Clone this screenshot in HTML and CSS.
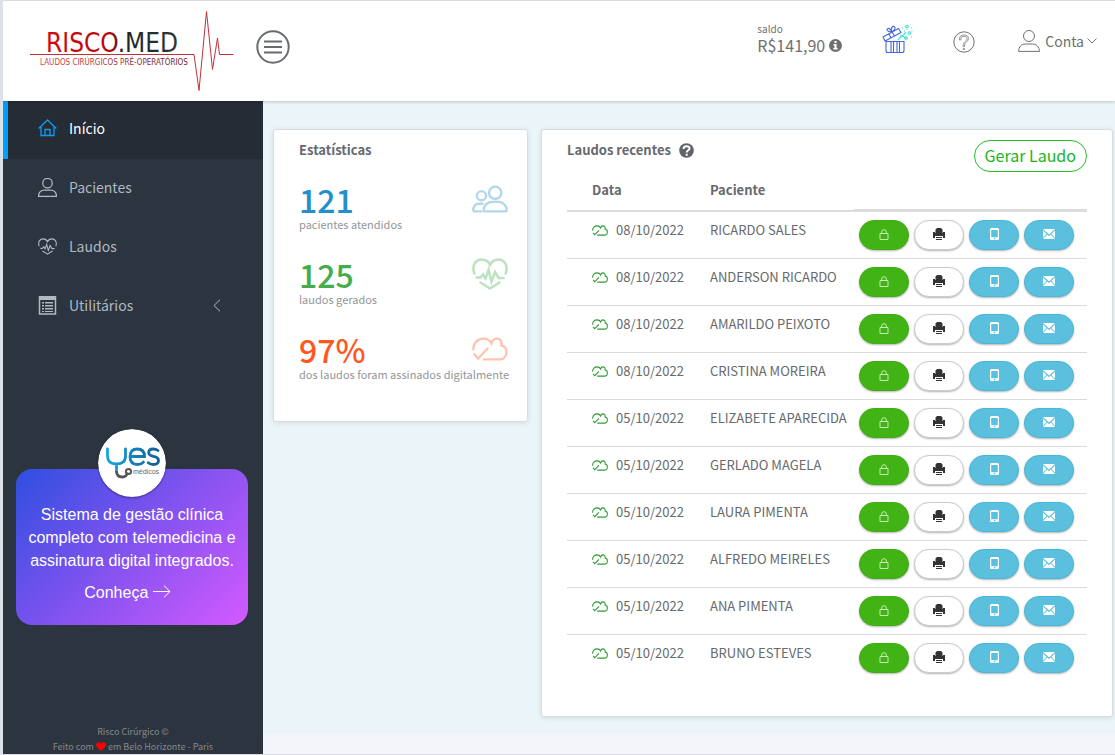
FILE: index.html
```html
<!DOCTYPE html>
<html lang="pt-BR">
<head>
<meta charset="utf-8">
<meta name="viewport" content="width=device-width, initial-scale=1">
<title>Risco.Med</title>
<link rel="stylesheet" href="styles.css">
</head>
<body>
<svg class="sprite" aria-hidden="true">
  <symbol id="i-user" viewBox="0 0 22 22"><circle cx="11" cy="6" r="5.5"/><path d="M.6 21.4c0-4.600 3-7.400 7-7.400h6.800c4 0 7 2.800 7 7.400z"/></symbol>
  <symbol id="i-heart" viewBox="0 0 36 32"><path d="M2.300 15.500C-1 6 5 1.500 9.500 1.500c4 0 7 2 8.500 5.500 1.500-3.500 4.500-5.500 8.500-5.500 4.500 0 10.500 4.500 7.200 14M4.500 19.500h4l2.500-3 2.500 4 3-8.500 3 11.500 3.500-9.500 3.500 6h5M8.500 24.500 18 30.500l9.500-6"/></symbol>
  <symbol id="i-cloud" viewBox="0 0 38 25"><path d="M1.500 13C1 6 6.500 1.500 12 1.500c4.500 0 7 2 8.500 5 1-3.500 3-5 5.500-5 3.500 0 6 3 5 7.500 3.500.5 5.500 3.500 5.500 7 0 4-3 7.500-7 7.500H12.500M2.500 18l4 4.500L16.500 12"/></symbol>
  <symbol id="i-lock" viewBox="0 0 10 11"><path d="M1 4.500h8v6H1zM2.700 4.500v-1.500a2.300 2.300 0 0 1 4.600 0v1.500"/></symbol>
  <symbol id="i-print" viewBox="0 0 12 12"><path d="M4 0h4l1.500 1.500V5h-7V1.500zM0 4h2v2h8V4h2v6h-2V8H2v2H0zM3 9h6v1H3zM3 11h6v1H3zM2 5h8v3H2z"/></symbol>
  <symbol id="i-phone" viewBox="0 0 9 12"><path fill-rule="evenodd" d="M1.500 0h6Q9 0 9 1.500v9Q9 12 7.500 12h-6Q0 12 0 10.500v-9Q0 0 1.500 0zM1.200 2v7.300h6.600V2zM3.800 10v1.200h1.500V10z"/></symbol>
  <symbol id="i-mail" viewBox="0 0 12 10"><path d="M0 0h12L6 5.500zM0 1.500 3.600 5 0 8.700zM12 1.500 8.400 5 12 8.700zM4.300 5.600 6 7.200l1.700-1.600L12 10H0z"/></symbol>
</svg>

<header class="topbar">
  <a class="brand" href="#" aria-label="Risco.Med">
    <svg width="206" height="84" viewBox="0 0 206 84">
      <defs>
        <linearGradient id="g-name"><stop offset="0" stop-color="#d6080c"/><stop offset=".5" stop-color="#b00a0e"/><stop offset=".56" stop-color="#222"/><stop offset="1" stop-color="#333"/></linearGradient>
        <linearGradient id="g-sub"><stop offset="0" stop-color="#d64545"/><stop offset="1" stop-color="#6d2228"/></linearGradient>
      </defs>
      <text class="brand-name" x="17" y="42" fill="url(#g-name)">RISCO.MED</text>
      <text class="brand-sub" x="11" y="55" fill="url(#g-sub)">LAUDOS CIRÚRGICOS PRÉ-OPERATÓRIOS</text>
      <path d="M1 44.500h164l5 36 7.500-79 6 58 5-31.500 2 16.500h14" fill="none" stroke="#bd3338"/>
    </svg>
  </a>
  <button class="icon-btn burger" type="button" aria-label="Menu">
    <svg class="line" width="34" height="34" viewBox="0 0 34 34"><circle cx="17" cy="17" r="15.700"/><path d="M8 11.500h18M8 17h18M8 22.500h18"/></svg>
  </button>
  <div class="balance">
    <span class="balance-label">saldo</span>
    <span class="balance-value">R$141,90
      <svg width="13" height="13" viewBox="0 0 13 13"><circle cx="6.500" cy="6.500" r="6.500" fill="#6f6f6f"/><path fill="#fff" d="M5.400 2h2.200v1.900H5.400zM4.500 5h3.100v4h1v1.500H4.400V9h1V6.500h-.9z"/></svg>
    </span>
  </div>
  <button class="icon-btn gift" type="button" aria-label="Presentes">
    <svg width="32" height="30" viewBox="0 0 32 30" fill="none" stroke-width="1.100">
      <g stroke="#4666dc"><path d="M4 17.500h18v9q0 2-2 2H6q-2 0-2-2zM9 18v10M11.500 18v10M15 18v10M17.500 18v10M1 13 16.500 4.500l2.500 4L3 17zM7 10l2 4M10 8l2.500 4M9.500 8C5 8 4 5 6 4.500s3 1.500 3.500 3.500C9 4 10 2 12 2.500s1 4-2.500 5.500"/></g>
      <g stroke="#35e3cb"><path d="M16 16c2-4 5-3 8-8M18 12c5-1 4 3 6 2"/><circle cx="25" cy="2.500" r="1.300"/><circle cx="27.500" cy="9" r="1.300"/><circle cx="24" cy="14" r="1.300"/><path d="M20 4h1M29 4h1M22 7h1M29 13h1M29.500 7h1M25 5v1"/></g>
    </svg>
  </button>
  <button class="icon-btn help" type="button" aria-label="Ajuda">
    <svg class="thin" width="22" height="22" viewBox="0 0 22 22"><circle cx="11" cy="11" r="10.200"/><path d="M6.500 9V8q0-4 4.500-4t4.500 3.600c0 3.500-4 3.400-4 6.400v1.500h-1.300V14c0-3.600 4-3.800 4-6.400Q14.200 5.300 11 5.300T7.800 8v1zM10.200 17.500h1.300v1h-1.300z" stroke-width=".700"/></svg>
  </button>
  <button class="icon-btn account" type="button">
    <svg class="thin" width="22" height="22"><use href="#i-user"/></svg>
    <span>Conta</span>
    <svg class="chev" width="10" height="6" viewBox="0 0 10 6"><path d="M.5.5 5 5 9.500.5"/></svg>
  </button>
</header>

<div class="shell">
  <aside class="sidebar">
    <nav class="menu">
      <a class="menu-item active" href="#"><svg class="thin" width="19" height="18" viewBox="0 0 19 18"><path stroke-width="1.300" d="M.7 9.500 9.500 1l8.800 8.500M3 8v8.500h13V8M7 16.500v-6h5v6"/></svg>Início</a>
      <a class="menu-item" href="#"><svg class="user-sm" width="19" height="19"><use href="#i-user"/></svg>Pacientes</a>
      <a class="menu-item" href="#"><svg class="heart-sm" width="19" height="17"><use href="#i-heart"/></svg>Laudos</a>
      <a class="menu-item" href="#"><svg width="19" height="19" viewBox="0 0 19 19"><path fill="none" stroke="currentColor" stroke-width="1.500" d="M1.500 1h16v17h-16z"/><path fill="currentColor" d="M1 0h17v4H1zM4 6h2v1.500H4zM7 6h8v1.500H7zM4 9h2v1.500H4zM7 9h8v1.500H7zM4 12h2v1.500H4zM7 12h8v1.500H7zM4 15h2v1H4zM7 15h8v1H7z"/></svg>Utilitários<svg class="thin caret" width="8" height="13" viewBox="0 0 8 13"><path d="M7 .7 1 6.500l6 5.800"/></svg></a>
    </nav>
    <section class="promo">
      <svg class="promo-logo" width="68" height="68" viewBox="0 0 68 68" role="img" aria-label="Yes médicos">
        <defs><linearGradient id="g-yes" gradientUnits="userSpaceOnUse" x1="8" y1="0" x2="62" y2="0"><stop offset="0" stop-color="#16a6e0"/><stop offset="1" stop-color="#155d93"/></linearGradient></defs>
        <circle cx="34" cy="34" r="34" fill="#fff"/>
        <g fill="none" stroke="url(#g-yes)" stroke-width="2.800" stroke-linecap="round"><path d="M9.500 20v7q0 8 9 8t9-8v-7M18.500 35v8"/><path d="M32 27.500h14.500q0-7.500-7.200-7.500t-7.300 7.500q0 8 7.500 8 4 0 6-2.500M60 21.500q-2-1.500-4.800-1.500-4.500 0-4.500 3.700 0 2.600 4.800 3.600 5 .9 5 4.200 0 4-5.300 4-3 0-5-1.800"/></g>
        <path d="M18.500 42q0 6 6 6 4 0 5-4.500" fill="none" stroke="#5b5556" stroke-width="2.800"/><circle cx="30.500" cy="42.500" r="2.600" fill="none" stroke="#5b5556" stroke-width="2"/>
        <text class="promo-logo-text" x="35" y="45">médicos</text>
      </svg>
      <p>Sistema de gestão clínica completo com telemedicina e assinatura digital integrados.</p>
      <a class="promo-link" href="#">Conheça <svg class="thin" width="18" height="13" viewBox="0 0 18 13"><path d="M0 6.500h17M11 .7l6 5.800-6 5.800"/></svg></a>
    </section>
    <footer class="credits">Risco Cirúrgico ©<br>Feito com <svg width="10" height="9" viewBox="0 0 10 9"><path fill="red" d="M5 9 .8 4.800C-1 2.500 1-.3 3.300.2 4.300.4 5 1.500 5 1.500S5.700.4 6.700.2C9-.3 11 2.500 9.200 4.800z"/></svg> em Belo Horizonte - Paris</footer>
  </aside>

  <main class="content">
    <section class="card stats">
      <h2>Estatísticas</h2>
      <div class="stat blue">
        <div class="stat-top"><strong>121</strong><svg width="36" height="28" viewBox="0 0 38 29"><circle cx="24.500" cy="8" r="6.500"/><path d="M13 27.500c-2-3.500 2-10 8-10h7c6 0 10 6.500 8 10zM10 27.500H2c-2-3 1-8 5.500-8H11"/><circle cx="10" cy="11" r="4.800"/></svg></div>
        <span>pacientes atendidos</span>
      </div>
      <div class="stat green">
        <div class="stat-top"><strong>125</strong><svg width="36" height="32"><use href="#i-heart"/></svg></div>
        <span>laudos gerados</span>
      </div>
      <div class="stat orange">
        <div class="stat-top"><strong>97%</strong><svg width="36" height="24"><use href="#i-cloud"/></svg></div>
        <span>dos laudos foram assinados digitalmente</span>
      </div>
    </section>

    <section class="card reports">
      <div class="card-head">
        <h2>Laudos recentes <svg width="15" height="15" viewBox="0 0 15 15"><circle cx="7.500" cy="7.500" r="7.300" fill="#606468"/><path fill="none" stroke="#fff" stroke-width="2" d="M4.500 6q0-2.800 3-2.800t3 2.300c0 2-2.800 1.500-2.800 4M7.700 10.800v2"/></svg></h2>
        <button class="new-report" type="button">Gerar Laudo</button>
      </div>
      <table>
        <colgroup><col class="col-date"><col><col class="col-actions"></colgroup>
        <thead><tr><th scope="col">Data</th><th scope="col">Paciente</th><th class="th-actions" aria-label="Ações"></th></tr></thead>
        <tbody id="rows"></tbody>
      </table>
    </section>
  </main>
</div>
<script src="app.js"></script>
</body>
</html>
```

FILE: app.js
```js
const reports = [
  ["08/10/2022", "RICARDO SALES"],
  ["08/10/2022", "ANDERSON RICARDO"],
  ["08/10/2022", "AMARILDO PEIXOTO"],
  ["08/10/2022", "CRISTINA MOREIRA"],
  ["05/10/2022", "ELIZABETE APARECIDA"],
  ["05/10/2022", "GERLADO MAGELA"],
  ["05/10/2022", "LAURA PIMENTA"],
  ["05/10/2022", "ALFREDO MEIRELES"],
  ["05/10/2022", "ANA PIMENTA"],
  ["05/10/2022", "BRUNO ESTEVES"]
];
const actions = [
  ["lock", "Assinar", 10, 11],
  ["print", "Imprimir", 12, 12],
  ["phone", "Enviar por celular", 9, 12],
  ["mail", "Enviar por e-mail", 12, 10]
];
const buttons = actions.map(([icon, label, w, h]) =>
  `<button type="button" class="pill pill-${icon}" aria-label="${label}"><svg width="${w}" height="${h}"><use href="#i-${icon}"/></svg></button>`
).join("");
document.getElementById("rows").innerHTML = reports.map(([date, name]) =>
  `<tr><td><span class="date"><svg width="16" height="11"><use href="#i-cloud"/></svg>${date}</span></td><td>${name}</td><td class="td-actions"><div class="actions">${buttons}</div></td></tr>`
).join("");
```

FILE: styles.css
```css
* { box-sizing: border-box; }
html { background: #dde2e8; }
body {
  margin: 0 0 0 3px;
  min-height: 100vh;
  display: flex;
  flex-direction: column;
  border-top: 1px solid #d9dbdd;
  border-bottom: 1px solid #d9dbe2;
  background: #f4f5fa;
  color: #66696d;
  font: 14px/20px "Noto Sans CJK SC", "Noto Sans", sans-serif;
}
button { font: inherit; color: inherit; cursor: pointer; }
a { color: inherit; text-decoration: none; }
svg { flex: none; }
.sprite { position: absolute; width: 0; height: 0; }
.thin { fill: none; stroke: currentColor; stroke-width: 1; }
.line { fill: none; stroke: #686b70; stroke-width: 2; }

.topbar {
  display: flex;
  align-items: flex-start;
  height: 100px;
  padding: 9px 18px 0 26px;
  background: #fff;
  box-shadow: 0 1px 3px rgba(0, 0, 0, .2);
  z-index: 1;
  color: #707070;
}
.brand svg { display: block; }
.brand-name { font: 26px "DejaVu Sans Condensed", "DejaVu Sans", sans-serif; }
.brand-sub { font: 8px "DejaVu Sans Condensed", "DejaVu Sans", sans-serif; }
.icon-btn { display: flex; align-items: center; padding: 0; border: 0; background: none; }
.burger { margin: 20px auto 0 21px; }
.balance { display: flex; flex-direction: column; margin-top: 12px; }
.balance-label { font-size: 10px; line-height: 14px; }
.balance-value { display: flex; align-items: center; gap: 4px; font-size: 16px; line-height: 18px; }
.gift { margin: 14px 0 0 40px; }
.help { margin: 21px 0 0 39px; }
.account { gap: 5px; margin: 20px 0 0 43px; }
.account .chev { margin-left: -2px; fill: none; stroke: #777; stroke-width: 1; }

.shell { display: flex; flex: 1; }
.sidebar {
  display: flex;
  flex-direction: column;
  width: 260px;
  flex: none;
  background: #2c343f;
  color: #b0b8c2;
}
.menu { display: flex; flex-direction: column; gap: 1px; }
.menu-item {
  display: flex;
  align-items: center;
  gap: 12px;
  height: 58px;
  padding: 0 42px 4px 30px;
  border-left: 5px solid transparent;
}
.menu-item.active { background: #252c35; border-color: #009ffd; color: #fff; }
.menu-item.active svg { color: #0e9cf0; }
.menu-item .caret { margin-left: auto; }
.user-sm { fill: none; stroke: currentColor; stroke-width: 1.5; }
.heart-sm { fill: none; stroke: currentColor; stroke-width: 2; }
.promo {
  display: flex;
  flex-direction: column;
  align-items: center;
  margin: 133px 15px auto 13px;
  padding: 0 8px 21px;
  border-radius: 16px;
  background: linear-gradient(135deg, #2f4fe0, #7b52ee 45%, #d45aff);
  color: #fff;
  font: 16px/23px "Liberation Sans", Arial, sans-serif;
  text-align: center;
}
.promo-logo { margin-top: -40px; border-radius: 50%; box-shadow: 0 1px 2px rgba(0, 0, 0, .4); }
.promo-logo-text { font: 7px "Liberation Sans", Arial, sans-serif; fill: #666; }
.promo p { margin: 6px 0 9px; }
.promo-link { padding-right: 9px; }
.credits { color: #85888c; font-size: 9px; line-height: 15px; text-align: center; }
.credits svg { vertical-align: -1px; }

.content {
  flex: 1;
  min-width: 0;
  display: grid;
  grid-template-columns: 37fr 83fr;
  align-items: start;
  gap: 13px;
  margin-bottom: 20px;
  padding: 28px 2px 17px 10px;
  background: #ebf4f8;
}
.card {
  min-width: 0;
  padding: 10px 25px 35px;
  border: 1px solid #dadcde;
  border-radius: 3px;
  background: #fff;
  box-shadow: 0 1px 5px rgba(0, 0, 0, .1);
}
h2 { display: flex; align-items: center; gap: 8px; margin: 0; font-size: 13px; line-height: 20px; }
.stats { padding-right: 19px; padding-bottom: 14px; }
.stats h2 { margin-bottom: 22px; }
.stat { height: 75px; white-space: nowrap; }
.stat-top { display: flex; align-items: center; justify-content: space-between; height: 34px; margin-bottom: 1px; }
.stat strong { font-size: 32px; line-height: 34px; font-weight: 500; }
.stat svg { fill: none; stroke: currentColor; stroke-width: 2.5; stroke-linecap: round; opacity: .35; overflow: visible; }
.stat span { display: block; color: #939699; font-size: 11px; line-height: 14px; }
.blue { color: #2390cb; }
.green { color: #43ad4c; }
.orange { color: #ff5722; }

.card-head { display: flex; justify-content: space-between; align-items: flex-start; }
.new-report {
  height: 32px;
  padding: 0 10px 2px;
  border: 1px solid #23c023;
  border-radius: 16px;
  background: #fff;
  color: #19b51c;
  font-size: 16px;
  line-height: 28px;
}
table { width: 100%; table-layout: fixed; border-spacing: 0; }
.col-date { width: 143px; }
.col-actions { width: 233px; }
th { padding: 8px 0 10px; border-bottom: 2px solid #dcdcdc; text-align: left; font-size: 13px; }
th.th-actions { border-bottom-width: 3px; }
th:first-child, td:first-child { padding-left: 25px; }
td { padding: 8px 0; border-bottom: 1px solid #dcdcdc; vertical-align: top; white-space: nowrap; font-size: 13px; }
tr:last-child td { border-bottom: 0; }
.date { display: flex; align-items: center; gap: 8px; }
.date svg { fill: none; stroke: #2f9a33; stroke-width: 2.5; }
td.td-actions { padding-left: 5px; }
.actions { display: flex; gap: 5px; }
.pill {
  display: flex;
  align-items: center;
  justify-content: center;
  width: 50px;
  height: 30px;
  padding: 0 0 2px;
  border: 1px solid #46b8da;
  border-radius: 15px;
  background: #5bc0de;
  box-shadow: 0 1px 2px rgba(0, 0, 0, .3);
  fill: #fff;
}
.pill-lock { border-color: #3fae14; background: #41b314; fill: none; stroke: #c5ecb5; }
.pill-print { border-color: #ccc; background: #fff; fill: #333; }
```
